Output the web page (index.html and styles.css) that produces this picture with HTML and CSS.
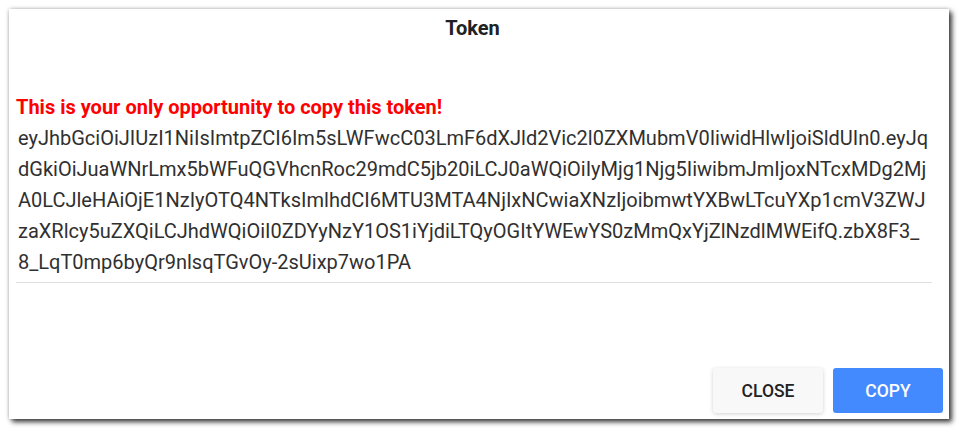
FILE: index.html
```html
<!DOCTYPE html>
<html>
<head>
<meta charset="utf-8">
<link rel="stylesheet" href="styles.css">
</head>
<body>
<div class="dialog">
  <div class="title">Token</div>
  <div class="content">
    <div class="warning">This is your only opportunity to copy this token!</div>
    <div class="token">eyJhbGciOiJIUzI1NiIsImtpZCI6Im5sLWFwcC03LmF6dXJld2Vic2l0ZXMubmV0IiwidHlwIjoiSldUIn0.eyJqdGkiOiJuaWNrLmx5bWFuQGVhcnRoc29mdC5jb20iLCJ0aWQiOiIyMjg1Njg5IiwibmJmIjoxNTcxMDg2MjA0LCJleHAiOjE1NzIyOTQ4NTksImlhdCI6MTU3MTA4NjIxNCwiaXNzIjoibmwtYXBwLTcuYXp1cmV3ZWJzaXRlcy5uZXQiLCJhdWQiOiI0ZDYyNzY1OS1iYjdiLTQyOGItYWEwYS0zMmQxYjZlNzdlMWEifQ.zbX8F3_8_LqT0mp6byQr9nlsqTGvOy-2sUixp7wo1PA</div>
  </div>
  <div class="actions">
    <button class="btn btn-close">CLOSE</button>
    <button class="btn btn-copy">COPY</button>
  </div>
</div>
</body>
</html>
```
FILE: styles.css
```css
html, body {
  margin: 0;
  background: #ffffff;
}
body {
  padding: 9px;
  font-family: Roboto, "Liberation Sans", sans-serif;
}
.dialog {
  width: 940px;
  height: 410px;
  box-sizing: border-box;
  background: #ffffff;
  box-shadow: 0 0 4px rgba(0,0,0,0.25), 3px 3px 5px rgba(0,0,0,0.75);
  display: flex;
  flex-direction: column;
  padding: 0 6px 6px 7px;
}
.title {
  text-align: center;
  font-weight: 700;
  font-size: 20px;
  color: #212121;
  padding: 7px 14px 0 0;
  line-height: 24px;
}
.content {
  flex: 1;
  padding: 52px 11px 0 0;
}
.warning {
  color: #ff0000;
  font-weight: 700;
  font-size: 20px;
  line-height: 31px;
}
.token {
  font-size: 20px;
  line-height: 31px;
  color: #303030;
  padding: 0 2px 4px 2px;
  border-bottom: 1px solid #dedede;
  word-break: break-all;
}
.actions {
  display: flex;
  justify-content: flex-end;
  gap: 10px;
}
.btn {
  width: 110px;
  height: 45px;
  border: none;
  border-radius: 3px;
  font-family: Roboto, "Liberation Sans", sans-serif;
  font-size: 17.5px;
  font-weight: 500;
}
.btn-close {
  background: #f8f8f8;
  color: #222222;
  box-shadow: 0 1px 4px rgba(0,0,0,0.18);
}
.btn-copy {
  background: #448aff;
  color: #ffffff;
}
```
